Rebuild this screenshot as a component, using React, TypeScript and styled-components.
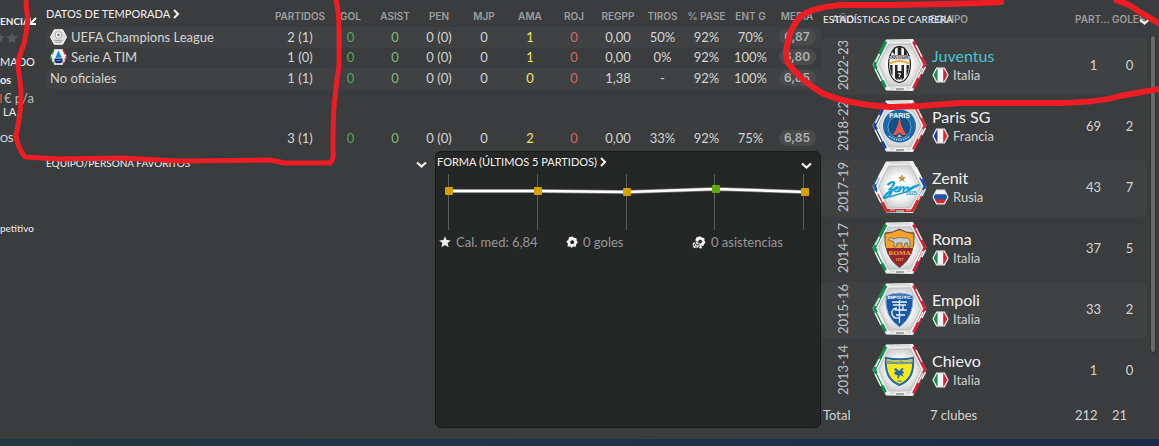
import React from "react";
import styled, { createGlobalStyle } from "styled-components";

const GlobalStyle = createGlobalStyle`
  *, *::before, *::after { box-sizing: border-box; }
  body {
    margin: 0;
    background: #3b3c3d;
    color: #d3d4d4;
    font: 13px/20px Lato, "Liberation Sans", sans-serif;
  }
  button { border: 0; padding: 0; background: none; color: inherit; font: inherit; cursor: pointer; }
  h2, p, ul { margin: 0; padding: 0; font: inherit; }
`;

const STRIPE = "#404142";

const Page = styled.div`
  position: relative;
  display: flex;
  flex-direction: column;
  min-height: 100vh;
  overflow: hidden;
`;

const Main = styled.main`
  flex: 1;
  display: grid;
  grid-template-columns: 46px minmax(0, 1fr) 338px;
`;

const BottomBar = styled.footer`
  height: 7px;
  background: linear-gradient(90deg, #21393f, #20354a 35%, #1b2a48);
`;

/* Cut-off profile column */
const ProfileColumn = styled.aside`
  display: flex;
  flex-direction: column;
  padding-top: 12px;
  overflow: hidden;
  white-space: nowrap;
`;

const ProfileLine = styled.p<{ $bold?: boolean; $size?: number; $indent?: boolean; $gap?: number }>`
  display: flex;
  align-items: center;
  color: #eeeeee;
  font-size: ${(p) => p.$size ?? 11}px;
  font-weight: ${(p) => (p.$bold ? 700 : 400)};
  line-height: 18px;
  margin-top: ${(p) => p.$gap ?? 0}px;
  padding-left: ${(p) => (p.$indent ? 3 : 0)}px;
`;

const Money = styled.span`
  padding-left: 2px;
  color: #bdbebe;
`;

const MoneyDigit = styled.span`
  width: 2px;
  height: 9px;
  background: #a5543c;
`;

const Stars = styled.svg`
  display: block;
  width: 20px;
  height: 12px;
  margin-top: 2px;
  fill: #58595a;
`;

/* Central area */
const Center = styled.div`
  display: grid;
  grid-template-rows: auto 1fr;
  padding-bottom: 11px;
`;

const TitleButton = styled.button`
  display: flex;
  align-items: center;
  gap: 3px;
  color: #f2f2f2;
  font-size: 11px;
  line-height: 20px;
  white-space: nowrap;
`;

const SeasonTable = styled.table`
  width: 100%;
  height: 148px;
  table-layout: fixed;
  border-collapse: separate;
  border-spacing: 0;
  margin-bottom: 3px;
`;

const Col = styled.col<{ $w?: number }>`
  width: ${(p) => (p.$w ? `${p.$w}px` : "auto")};
`;

const HeadCell = styled.th<{ $left?: boolean }>`
  padding: 0;
  color: #9d9e9e;
  font: 600 10px/20px Inter, "Liberation Sans", sans-serif;
  text-align: ${(p) => (p.$left ? "left" : "center")};
  white-space: nowrap;
`;

const TitleHead = styled.th`
  padding: 0;
  text-align: left;
  font-weight: 400;
`;

const SeasonHeadRow = styled.tr`
  height: 27px;
  & > th { padding-top: 6px; vertical-align: top; }
  & > ${TitleHead} { padding-top: 4px; }
`;

const toneColor = { plain: "#d3d4d4", good: "#55a458", soft: "#7fb87f", warn: "#f0e56a", bad: "#d46663" };
type Tone = keyof typeof toneColor;

const SeasonCell = styled.td<{ $tone?: Tone }>`
  padding: 0 0 2px;
  text-align: center;
  line-height: 18px;
  white-space: nowrap;
  color: ${(p) => toneColor[p.$tone ?? "plain"]};
`;

const SeasonRow = styled.tr<{ $stripe?: boolean }>`
  height: ${(p) => (p.$stripe ? 21 : 20)}px;
  & > * { background: ${(p) => (p.$stripe ? STRIPE : "transparent")}; }
  & > :first-child { border-radius: 5px 0 0 5px; }
  & > :last-child { border-radius: 0 5px 5px 0; }
`;

const TotalsRow = styled.tr`
  height: 59px;
  & > td { padding-top: 39px; padding-bottom: 1px; }
`;

const CompetitionCell = styled.th`
  padding: 0 0 2px 4px;
  font-weight: 400;
  text-align: left;
`;

const Competition = styled.span`
  display: flex;
  align-items: center;
  gap: 4px;
  line-height: 18px;
`;

const Pill = styled.span`
  display: block;
  width: 37px;
  margin: 0 auto;
  border-radius: 8px;
  background: #4a4b4c;
  color: #b0b1b1;
  font: 600 12px/16px Inter, "Liberation Sans", sans-serif;
`;

const LowerRow = styled.div`
  display: grid;
  grid-template-columns: minmax(0, 1fr) 386px;
`;

const PanelHeader = styled.header`
  display: flex;
  justify-content: space-between;
  align-items: flex-start;
  height: 22px;
  padding-right: 8px;
`;

const ChevronButton = styled.button`
  display: flex;
  padding-top: 10px;
  color: #f4f4f4;
`;

const PanelTitle = styled.h2`
  color: #f2f2f2;
  font-size: 10px;
  line-height: 20px;
  padding-top: 2px;
`;

const FormPanel = styled.section`
  border: 1px solid #1a1b1b;
  border-radius: 6px;
  background: #252626;
  padding-left: 1px;
`;

const FormChart = styled.svg`
  display: block;
  width: 100%;
  height: auto;
`;

const Legend = styled.ul`
  display: grid;
  grid-template-columns: 127px 126px 1fr;
  padding: 2px 0 0 2px;
  list-style: none;
  color: #969797;
`;

const LegendItem = styled.li`
  display: flex;
  align-items: center;
  gap: 5px;
`;

/* Career */
const CareerPanel = styled.section`
  position: relative;
  display: grid;
  grid-template-columns: 1fr 4px;
  column-gap: 4px;
  align-items: start;
  padding-right: 4px;
`;

const CareerTitle = styled.h2`
  position: absolute;
  top: 9px;
  left: 2px;
  color: #f2f2f2;
  font-size: 10px;
  line-height: 20px;
`;

const CareerChevron = styled.button`
  position: absolute;
  top: 18px;
  right: 9px;
  display: flex;
  color: #f4f4f4;
`;

const CareerTable = styled.table`
  width: 100%;
  table-layout: fixed;
  border-collapse: separate;
  border-spacing: 0 4px;
`;

const CareerHeadRow = styled.tr`
  height: 30px;
`;

const CareerRow = styled.tr<{ $stripe: boolean }>`
  height: 57px;
  & > * { padding: 0 0 3px; background: ${(p) => (p.$stripe ? STRIPE : "transparent")}; }
  & > :first-child { border-radius: 5px 0 0 5px; }
  & > :last-child { border-radius: 0 5px 5px 0; }
`;

const CareerTotals = styled.tr`
  height: 22px;
  & > * { padding: 0; font-weight: 400; text-align: left; }
  & > :first-child { padding-left: 2px; }
`;

const Years = styled.span`
  display: block;
  margin: 0 auto;
  writing-mode: vertical-rl;
  transform: rotate(180deg);
  width: 20px;
  line-height: 20px;
  text-align: center;
  color: #c2c3c3;
  font-weight: 400;
`;

const BadgeImage = styled.svg`
  display: block;
  margin-left: 7px;
`;

const ClubName = styled.div<{ $current?: boolean }>`
  padding-left: 2px;
  color: ${(p) => (p.$current ? "#45c3d2" : "#f0f0f0")};
  font-size: 16px;
  line-height: 20px;
`;

const Country = styled.div`
  display: flex;
  align-items: center;
  gap: 4px;
  padding-left: 2px;
  line-height: 18px;
  color: #cfd0d0;
`;

const NumberCell = styled.td`
  text-align: center;
`;

const ScrollThumb = styled.div`
  height: 316px;
  margin-top: 36px;
  border-radius: 2px;
  background: #686969;
  box-shadow: 0 0 0 1px #303131;
`;

const Ink = styled.svg<{ $side: "left" | "right" }>`
  position: absolute;
  top: 0;
  ${(p) => p.$side}: 0;
  fill: none;
  stroke: #ec1d24;
  stroke-width: 6;
  stroke-linecap: round;
  stroke-linejoin: round;
  pointer-events: none;
`;

/* Icons */
const ProfileChevron = styled.svg`
  margin-left: -1px;
`;

const ChevronRight = () => (
  <svg width="7" height="10" viewBox="0 0 7 10" fill="none" stroke="currentColor" strokeWidth="2">
    <path d="M1 1l4 4-4 4" />
  </svg>
);
const ChevronDown = () => (
  <svg width="11" height="8" viewBox="0 0 11 8" fill="none" stroke="currentColor" strokeWidth="2.2">
    <path d="M1 1.5l4.5 4 4.5-4" />
  </svg>
);
const StarIcon = () => (
  <svg width="12" height="12" viewBox="0 0 12 12" fill="#f1f1f1">
    <path d="M6 .3l1.6 3.8 4.2.3-3.2 2.7 1 4.1L6 9l-3.6 2.2 1-4.1L.2 4.4l4.2-.3z" />
  </svg>
);
const BallIcon = () => (
  <svg width="12" height="12" viewBox="0 0 12 12">
    <path d="M3 1.200L6.500.6 8 1.800l2.500.4.2 2.300 1.200 2-1.700 1.800-.4 2.500-2.500-.2L5.500 12l-1-1.400-3-.2.400-2.700L.3 5.600l2-1.800z" fill="#f1f1f1" />
    <path d="M6.200 4l2.100 1.500-.8 2.500H4.900l-.8-2.500z" fill="#242525" />
  </svg>
);
const AssistIcon = () => (
  <svg width="14" height="13" viewBox="0 0 14 13">
    <path d="M4.500 1.200L8 .2l2 1.200 2.400.6v2.500l1.200 2-1.600 1.800-.6 1.700-2-.2L7 10 4 6.500 3.400 3.800z" fill="#f1f1f1" />
    <path d="M8.200 3.400l2.100 1.500-.8 2.400H7.200L6.100 5z" fill="#242525" />
    <circle cx="3.700" cy="9" r="3.700" fill="#242525" />
    <circle cx="3.700" cy="9" r="2.500" fill="none" stroke="#f1f1f1" strokeWidth="1.600" strokeDasharray="3 .8" />
    <path d="M3.700 8l1.200.9-.5 1.300H3l-.5-1.300z" fill="#f1f1f1" />
    <circle cx="8.600" cy="11.200" r="1.300" fill="#f1f1f1" />
  </svg>
);

const ChampionsIcon = () => (
  <svg width="17" height="16" viewBox="0 0 17 16">
    <path d="M.5 8L4.300.8h8.400L16.500 8l-3.800 7.200H4.300z" fill="#dedede" stroke="#fff" />
    <circle cx="8.500" cy="6" r="3.400" fill="#fff" stroke="#a2a4a6" />
    <path d="M8.500 4.200l1.600 1.300-.6 1.700h-2l-.6-1.700z" fill="#85888a" />
    <path d="M4.500 11.400h8M5.500 13.200h6" stroke="#a0a2a4" />
  </svg>
);
const SerieAIcon = () => (
  <svg width="17" height="16" viewBox="0 0 17 16">
    <path d="M.5 8L4.300.8h8.400L16.500 8l-3.800 7.200H4.300z" fill="#f4f4f4" stroke="#fff" />
    <path d="M4 1L.6 8 4 15" fill="none" stroke="#169247" strokeWidth="1.400" strokeDasharray="5 1.500" />
    <path d="M13 1l3.400 7L13 15" fill="none" stroke="#cf2b3a" strokeWidth="1.400" strokeDasharray="5 1.500" />
    <path d="M8.500 1.500l3.200 7.200H5.300z" fill="#1785cf" />
    <path d="M4.500 9.500h8v3.600l-2 1.200h-4l-2-1.200z" fill="#142a70" />
    <path d="M6.500 11.500h4" stroke="#5b9bd8" />
  </svg>
);

type Nation = "Italia" | "Francia" | "Rusia";
const rims: Record<Nation, [string, string, string]> = {
  Italia: ["#12904a", "#f2f2f2", "#d3233b"],
  Francia: ["#20409b", "#f2f2f2", "#e32a3c"],
  Rusia: ["#f2f2f2", "#2353b0", "#d42a2a"],
};

const Flag = ({ nation }: { nation: Nation }) => {
  const [a, b, c] = rims[nation];
  const hex = "M1 8L4.600 1.200h7.800L16 8l-3.600 6.800H4.600z";
  return (
    <svg width="17" height="16" viewBox="0 0 17 16">
      <clipPath id={`flag-${nation}`}><path d={hex} /></clipPath>
      <g clipPath={`url(#flag-${nation})`}>
        {nation === "Rusia" ? (
          <>
            <path d="M0 0h17v5.500H0z" fill={a} />
            <path d="M0 5.500h17v5H0z" fill={b} />
            <path d="M0 10.500h17V16H0z" fill={c} />
          </>
        ) : (
          <>
            <path d="M0 0h5.500v16H0z" fill={a} />
            <path d="M5.500 0h6v16h-6z" fill={b} />
            <path d="M11.500 0H17v16h-5.500z" fill={c} />
          </>
        )}
      </g>
      <path d={hex} fill="none" stroke="#eceded" strokeWidth="1.200" />
    </svg>
  );
};

const Rim = ({ nation }: { nation: Nation }) => {
  const [a, b, c] = rims[nation];
  if (nation === "Rusia")
    return (
      <>
        <path d="M6.500 17L2.500 26l2.500 6M48.500 17L53 26l-4 9" stroke={b} />
        <path d="M6 34l8.500 16.500h26L49 35" stroke={c} />
      </>
    );
  return (
    <>
      <path d="M14 3.500L2.500 26.500l11 23" stroke={a} />
      <path d="M41.500 3.500l11.500 23-11.500 24" stroke={c} />
    </>
  );
};

const Badge = ({ nation, children }: { nation: Nation; children: React.ReactNode }) => (
  <BadgeImage width="55" height="54" viewBox="0 0 55 54">
    <defs>
      <radialGradient id="plate">
        <stop offset="0.5" stopColor="#ffffff" />
        <stop offset="1" stopColor="#cfd0d1" />
      </radialGradient>
    </defs>
    <path d="M.5 26.500L14 1.500 41 1l13.500 25.500L41 53l-27-.5z" fill="#eeefef" />
    <g fill="none" strokeWidth="3"><Rim nation={nation} /></g>
    <path d="M3.500 24l4-8M3 31l6 12M5.500 30l6 12M53.500 29L50 36M44 7l6 12M51 30l-5 10" stroke="#fff" strokeWidth="1.400" />
    <path d="M24 51h8" stroke="#a5a6a8" strokeWidth="2" />
    <path d="M17 3h21M18 50h5M34 50h5" stroke="#c9cacb" strokeWidth="1" />
    <path d="M6.500 26.500L16.500 6.200l22-.4 10.500 20.700L38.500 47.800l-22 .2z" fill="url(#plate)" stroke="#bcbdbe" />
    {children}
  </BadgeImage>
);

const SvgLabel = styled.text<{ $size: number; $serif?: boolean }>`
  font: 700 ${(p) => p.$size}px ${(p) => (p.$serif ? '"Liberation Serif", serif' : '"Liberation Sans", sans-serif')};
  text-anchor: middle;
`;

const Juventus = () => (
  <>
    <ellipse cx="27.500" cy="26.500" rx="11.500" ry="18.500" fill="#1d1d1d" />
    <ellipse cx="27.500" cy="26.500" rx="10.300" ry="17.300" fill="#f5f5f5" />
    <path d="M20.500 14v-1a14 14 0 0 1 2.500-3v7zM25.700 8.200h3.600V17h-3.600zM32 10a14 14 0 0 1 2.800 4v3H32zM18 27h2.500v11q-2.500-4-2.500-11zM23 27h2.500v15.500L23 40zM29.500 27H32v13l-2.500 2.500zM34.500 27H37q0 7-2.500 11z" fill="#242424" />
    <path d="M17.300 17.500h20.400v3.600H17.300z" fill="#242424" />
    <SvgLabel x="27.500" y="20.800" $size={4} fill="#fff">JUVENTUS</SvgLabel>
    <path d="M17.300 24.500q10.200-5 20.400 0v2q-10.200-5-20.400 0z" fill="#e5ad31" />
    <path d="M23.500 33h8v5l-4 4-4-4z" fill="#242424" />
    <path d="M26 35l3 1-2 1.500 1 2" stroke="#fff" fill="none" />
  </>
);
const Paris = () => (
  <>
    <circle cx="27.500" cy="27" r="17.400" fill="#dce7ef" />
    <circle cx="27.500" cy="27" r="16.500" fill="#1d69a8" />
    <circle cx="27.500" cy="28" r="11.500" fill="#164f86" stroke="#8db7d4" strokeWidth=".7" />
    <SvgLabel x="27.500" y="19" $size={7} fill="#f3f6f8">PARIS</SvgLabel>
    <path d="M27 19h1q.6 9 6.500 17h-4q-3-4-6 0h-4q6-7 6.500-17z" fill="#ef5350" />
    <path d="M24 30h7" stroke="#ef5350" strokeWidth="1.800" />
    <path d="M25 38l2.500-3 2.500 3z" fill="#d2b566" />
    <path d="M17 37q10.500 8 21 0" fill="none" stroke="#bcd4e6" strokeWidth="1.400" strokeDasharray="1.500 1" />
  </>
);
const ZenitCrest = () => (
  <>
    <path d="M30 14l1.200 2.900 3 .2-2.300 2 .8 3-2.700-1.600-2.700 1.600.8-3-2.300-2 3-.2z" fill="#b99b52" />
    <path d="M15.500 25q4-4 6.500-2.500 1 2-4 6.500 3 0 1 4-3 5-7 5 0-4 11-9" fill="none" stroke="#159dd9" strokeWidth="2.200" />
    <path d="M22 30q4-1 4-3-3-.5-4 3 .5 3 4.500 1l2-5-1.500 6q3-6 5-5l-1 5q3-5.500 5-5l-.5 2.500q5-3 12-5-8 4-12 7L17 37" fill="none" stroke="#159dd9" strokeWidth="1.500" />
    <SvgLabel x="39" y="35" $size={5} fill="#159dd9">1925</SvgLabel>
  </>
);
const RomaCrest = () => (
  <>
    <path d="M13 12q8 0 14.500-4Q34 12 42 12q2 23-14.500 34.500Q11 35 13 12z" fill="#96222f" stroke="#5c5546" />
    <path d="M13.500 12.800Q21 12.200 27.500 9 34 12.200 41.500 12.800q.4 8-.8 14.200H14.300Q13 20 13.500 12.800z" fill="#f3a32b" />
    <path d="M17 18l2-1.500 3 1.500q4-2.500 9-1h5l2 3v6h-2l-.5-4H33l-1 4h-2v-4h-5l-1 4h-2v-5l-2-1-3-.5z" fill="#c9cdce" stroke="#5e6465" strokeWidth=".8" />
    <SvgLabel x="27.500" y="34" $size={7} $serif fill="#e9ae3c">ROMA</SvgLabel>
    <SvgLabel x="27.500" y="40" $size={4} $serif fill="#e9ae3c">1927</SvgLabel>
  </>
);
const EmpoliCrest = () => (
  <>
    <path d="M14 14q13-6 27 0 1 21-13.500 31Q12 35 14 14z" fill="#1c57a6" stroke="#8fb3da" />
    <path d="M15 14.500q12-5 25 0v3q-12-4-25 0z" fill="#4f83c0" />
    <SvgLabel x="27.500" y="16.500" $size={4} fill="#fff">EMPOLI F.C.</SvgLabel>
    <path d="M27.500 18v23M20 20h15M21 23h13M31 23v5M23 28h12M33 33h-9M25 26q-6 1-5 6t8 4" fill="none" stroke="#eaf2fa" strokeWidth="1.300" />
  </>
);
const ChievoCrest = () => (
  <>
    <path d="M14 15q13.500 2.500 27 0 2 21-13.500 27Q12 36 14 15z" fill="#f6ea1d" stroke="#2668ae" strokeWidth="2" />
    <path d="M14.500 16q13 3 26 0v4q-13 3-26 0z" fill="#b9c868" />
    <SvgLabel x="27.500" y="20.500" $size={4} fill="#2668ae">ChievoVerona</SvgLabel>
    <path d="M22 26l2-1 2 2 1 1 3-3 2 1-2 1 1 1 1 2-2 1 2 3-2-1-2-1-1 3-2 .5 1-3-3-1-1-2 2-1z" fill="#2668ae" />
    <path d="M25.500 38h4" stroke="#2668ae" />
  </>
);

/* Data */
const columns = ["PARTIDOS", "GOL", "ASIST", "PEN", "MJP", "AMA", "ROJ", "REGPP", "TIROS", "% PASE", "ENT G", "MEDIA"];
const widths = [58, 43, 46, 42, 48, 44, 44, 44, 45, 43, 45, 48];
const tones: Tone[] = ["plain", "good", "soft", "plain", "plain", "warn", "bad"];

const season = [
  { name: "UEFA Champions League", icon: <ChampionsIcon />, values: ["2 (1)", "0", "0", "0 (0)", "0", "1", "0", "0,00", "50%", "92%", "70%", "6,87"] },
  { name: "Serie A TIM", icon: <SerieAIcon />, values: ["1 (0)", "0", "0", "0 (0)", "0", "1", "0", "0,00", "0%", "92%", "100%", "6,80"] },
  { name: "No oficiales", icon: null, values: ["1 (1)", "0", "0", "0 (0)", "0", "0", "0", "1,38", "-", "92%", "100%", "6,85"] },
];
const seasonTotals = ["3 (1)", "0", "0", "0 (0)", "0", "2", "0", "0,00", "33%", "92%", "75%", "6,85"];

const career: { years: string; club: string; nation: Nation; crest: React.ReactNode; games: number; goals: number }[] = [
  { years: "2022-23", club: "Juventus", nation: "Italia", crest: <Juventus />, games: 1, goals: 0 },
  { years: "2018-22", club: "Paris SG", nation: "Francia", crest: <Paris />, games: 69, goals: 2 },
  { years: "2017-19", club: "Zenit", nation: "Rusia", crest: <ZenitCrest />, games: 43, goals: 7 },
  { years: "2014-17", club: "Roma", nation: "Italia", crest: <RomaCrest />, games: 37, goals: 5 },
  { years: "2015-16", club: "Empoli", nation: "Italia", crest: <EmpoliCrest />, games: 33, goals: 2 },
  { years: "2013-14", club: "Chievo", nation: "Italia", crest: <ChievoCrest />, games: 1, goals: 0 },
];

const formPoints = [
  { x: 12, y: 17, good: false },
  { x: 101, y: 17, good: false },
  { x: 190, y: 18, good: false },
  { x: 279, y: 15, good: true },
  { x: 368, y: 18, good: false },
];
const formLine = formPoints.map((p) => `${p.x},${p.y}`).join(" ");

const Stats = ({ values }: { values: string[] }) => (
  <>
    {values.map((v, i) => (
      <SeasonCell key={columns[i]} $tone={tones[i]}>
        {i === values.length - 1 ? <Pill>{v}</Pill> : v}
      </SeasonCell>
    ))}
  </>
);

const Profile = () => (
  <ProfileColumn>
    <ProfileLine $bold $size={10}>
      ENCIA
      <ProfileChevron width="8" height="8" viewBox="0 0 8 8" fill="none" stroke="#fff" strokeWidth="2">
        <path d="M1 1v6h6M7 1L2 6" />
      </ProfileChevron>
    </ProfileLine>
    <Stars viewBox="0 0 20 12">
      <path d="M12 0l1.700 4 4.300.4-3.300 2.800 1 4.300L12 9.200l-3.700 2.300 1-4.300L6 4.400l4.300-.4zM0 1l1.300 3 3.200.4L2 7l.8 4L0 9z" />
    </Stars>
    <ProfileLine $gap={9}>MADO</ProfileLine>
    <ProfileLine $bold>os</ProfileLine>
    <ProfileLine $size={13}><MoneyDigit /><Money>€ p/a</Money></ProfileLine>
    <ProfileLine $indent $gap={-4}>LA</ProfileLine>
    <ProfileLine $gap={8} $size={10}>OS</ProfileLine>
    <ProfileLine $gap={72} $size={10}>petitivo</ProfileLine>
  </ProfileColumn>
);

const Season = () => (
  <SeasonTable>
    <colgroup>
      <Col />
      {widths.map((w, i) => <Col key={columns[i]} $w={w} />)}
    </colgroup>
    <thead>
      <SeasonHeadRow>
        <TitleHead scope="col"><TitleButton>DATOS DE TEMPORADA <ChevronRight /></TitleButton></TitleHead>
        {columns.map((c) => <HeadCell key={c} scope="col">{c}</HeadCell>)}
      </SeasonHeadRow>
    </thead>
    <tbody>
      {season.map((row, i) => (
        <SeasonRow key={row.name} $stripe={i % 2 === 0}>
          <CompetitionCell scope="row"><Competition>{row.icon}{row.name}</Competition></CompetitionCell>
          <Stats values={row.values} />
        </SeasonRow>
      ))}
    </tbody>
    <tfoot>
      <TotalsRow>
        <SeasonCell />
        <Stats values={seasonTotals} />
      </TotalsRow>
    </tfoot>
  </SeasonTable>
);

const Form = () => (
  <FormPanel>
    <PanelHeader>
      <TitleButton>FORMA (ÚLTIMOS 5 PARTIDOS) <ChevronRight /></TitleButton>
      <ChevronButton aria-label="Cambiar panel"><ChevronDown /></ChevronButton>
    </PanelHeader>
    <FormChart viewBox="0 0 383 56" role="img" aria-label="Forma de los últimos 5 partidos">
      <path d="M11.500 0v56M100.500 0v56M189.500 0v56M277.500 0v56M366.500 0v56" stroke="#5c5d5d" />
      <polyline points={formLine} fill="none" stroke="#777a7a" strokeWidth="4" />
      <polyline points={formLine} fill="none" stroke="#ffffff" strokeWidth="2.500" />
      {formPoints.map((p) => (
        <rect key={p.x} x={p.x - 4} y={p.y - 4} width="8" height="8" rx="1" fill={p.good ? "#5bab00" : "#d3a200"} />
      ))}
    </FormChart>
    <Legend>
      <LegendItem><StarIcon /> Cal. med: 6,84</LegendItem>
      <LegendItem><BallIcon /> 0 goles</LegendItem>
      <LegendItem><AssistIcon /> 0 asistencias</LegendItem>
    </Legend>
  </FormPanel>
);

const Career = () => (
  <CareerPanel>
    <CareerTable>
      <colgroup>
        <Col $w={44} /><Col $w={65} /><Col /><Col $w={37} /><Col $w={35} />
      </colgroup>
      <thead>
        <CareerHeadRow>
          <HeadCell scope="col">AÑO</HeadCell>
          <HeadCell scope="col" aria-label="Escudo" />
          <HeadCell scope="col" $left>EQUIPO</HeadCell>
          <HeadCell scope="col" $left>PART…</HeadCell>
          <HeadCell scope="col" $left>GOLES</HeadCell>
        </CareerHeadRow>
      </thead>
      <tbody>
        {career.map((c, i) => (
          <CareerRow key={c.years} $stripe={i % 2 === 0}>
            <th scope="row"><Years>{c.years}</Years></th>
            <td><Badge nation={c.nation}>{c.crest}</Badge></td>
            <td>
              <ClubName $current={i === 0}>{c.club}</ClubName>
              <Country><Flag nation={c.nation} /> {c.nation}</Country>
            </td>
            <NumberCell>{c.games}</NumberCell>
            <NumberCell>{c.goals}</NumberCell>
          </CareerRow>
        ))}
      </tbody>
      <tfoot>
        <CareerTotals>
          <th scope="row">Total</th>
          <td />
          <td>7 clubes</td>
          <td>212</td>
          <td>21</td>
        </CareerTotals>
      </tfoot>
    </CareerTable>
    <ScrollThumb />
    <CareerTitle>ESTADÍSTICAS DE CARRERA</CareerTitle>
    <CareerChevron aria-label="Cambiar panel"><ChevronDown /></CareerChevron>
  </CareerPanel>
);

export default function App() {
  return (
    <Page>
      <GlobalStyle />
      <Main>
        <Profile />
        <Center>
          <Season />
          <LowerRow>
            <section>
              <PanelHeader>
                <PanelTitle>EQUIPO/PERSONA FAVORITOS</PanelTitle>
                <ChevronButton aria-label="Cambiar panel"><ChevronDown /></ChevronButton>
              </PanelHeader>
            </section>
            <Form />
          </LowerRow>
        </Center>
        <Career />
      </Main>
      <BottomBar />
      <Ink $side="left" width="345" height="170" viewBox="0 0 345 170" aria-hidden="true">
        <path strokeWidth="5" d="M26 0Q26 10 28 19Q26 36 24 44Q18 58 18 66L21 90Q21 108 20 112Q18 126 16 136Q18 148 25 157L60 159L120 158L180 161L270 160L285 163L330 163Q334 160 333 150Q333 110 335 98Q337 76 339 66L339 30Q339 12 336 0" />
      </Ink>
      <Ink $side="right" width="379" height="115" viewBox="0 0 379 115" aria-hidden="true">
        <path d="M221 2L202 3L165 4L110 5L60 5Q30 8 20 17Q10 28 8 42Q4 54 8 63Q20 80 42 93Q66 104 110 107L140 106L180 103L283 103Q320 102 340 96L379 89M336 0Q350 4 358 11L382 25" />
      </Ink>
    </Page>
  );
}
